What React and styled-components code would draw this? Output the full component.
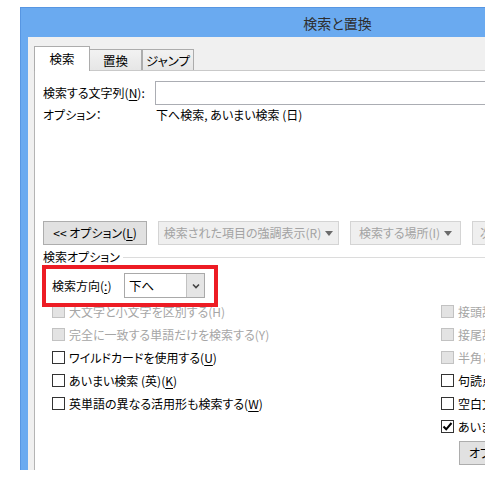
import React from "react";
import styled, { createGlobalStyle } from "styled-components";

const GlobalStyle = createGlobalStyle`
  html, body {
    margin: 0;
    padding: 0;
    background: #fff;
  }
  body {
    font-family: "Noto Sans CJK JP", "Noto Sans", sans-serif;
    font-size: 12px;
    font-feature-settings: "palt" 1;
    color: #000;
  }
`;

const Page = styled.div`
  width: 485px;
  height: 480px;
  overflow: hidden;
  box-sizing: border-box;
  padding: 7px 0 0 20px;
`;

const Window = styled.div`
  width: 634px;
  height: 463px;
  display: flex;
  flex-direction: column;
  background: #6aaaf0;
  border-top: 1px solid #5796e2;
  border-left: 1px solid #5796e2;
  box-sizing: border-box;
`;

const TitleBar = styled.div`
  height: 29px;
  display: flex;
  align-items: center;
  justify-content: center;
  font-size: 14px;
  color: #2e2e2e;
`;

const Client = styled.div`
  flex: 1;
  margin-left: 7px;
  background: #f0f0f0;
  padding: 9px 0 0 6px;
  display: flex;
  flex-direction: column;
  min-height: 0;
`;

const TabStrip = styled.div`
  height: 24px;
  display: flex;
  align-items: flex-end;
`;

const Tab = styled.div`
  position: relative;
  box-sizing: border-box;
  width: ${(p) => (p.$active ? 56 : 52)}px;
  height: ${(p) => (p.$active ? 25 : 21)}px;
  margin-bottom: ${(p) => (p.$active ? -1 : 0)}px;
  z-index: ${(p) => (p.$active ? 1 : 0)};
  border: 1px solid #acacac;
  border-bottom: none;
  border-left: ${(p) => (p.$joined ? "none" : "1px solid #acacac")};
  background: ${(p) => (p.$active ? "#fff" : "linear-gradient(#f2f2f2, #e6e6e6)")};
  display: flex;
  align-items: center;
  justify-content: center;
  font-size: 12.5px;
  line-height: 1;
  padding-top: ${(p) => (p.$active ? 1 : 2)}px;
`;

const Panel = styled.div`
  position: relative;
  flex: 1;
  background: #fff;
  border-left: 1px solid #b4b4b4;
  border-top: 1px solid #c9c9c9;
  padding-left: 8px;
  display: flex;
  flex-direction: column;
`;

const SearchRow = styled.div`
  margin-top: 10px;
  height: 24px;
  display: flex;
  align-items: center;
`;

const FieldLabel = styled.span`
  width: ${(p) => p.$w}px;
  flex: none;
  white-space: nowrap;
  line-height: 18px;
`;

const Key = styled.span`
  text-decoration: underline;
  text-underline-offset: 2px;
`;

const TextBox = styled.div`
  width: 440px;
  height: 24px;
  box-sizing: border-box;
  border: 1px solid #abadb3;
  background: #fff;
`;

const InfoRow = styled.div`
  margin-top: 1px;
  display: flex;
  line-height: 18px;
  white-space: nowrap;
`;

const ButtonRow = styled.div`
  margin-top: 97px;
  display: flex;
  gap: 11px;
`;

const Button = styled.div`
  flex: none;
  width: ${(p) => (p.$w ? `${p.$w}px` : "auto")};
  height: 24px;
  box-sizing: border-box;
  padding: 0 7px;
  border: 1px solid ${(p) => (p.$disabled ? "#d4d4d4" : "#adadad")};
  background: ${(p) => (p.$disabled ? "#efefef" : "#e1e1e1")};
  color: ${(p) => (p.$disabled ? "#a3a3a3" : "#000")};
  display: flex;
  align-items: center;
  justify-content: ${(p) => (p.$w ? "center" : "flex-start")};
  gap: 4px;
  white-space: nowrap;
  line-height: 1;
`;

const Caret = styled.svg`
  width: 8px;
  height: 5px;
  flex: none;
`;

const GroupHeader = styled.div`
  margin-top: 4px;
  height: 16px;
  display: flex;
  align-items: center;
  gap: 3px;
  white-space: nowrap;
  line-height: 16px;
`;

const GroupLine = styled.div`
  flex: 1;
  border-top: 1px solid #dcdcdc;
`;

const DirectionRow = styled.div`
  margin-top: 8px;
  padding-left: 9px;
  height: 25px;
  display: flex;
  align-items: center;
`;

const Select = styled.div`
  width: 81px;
  height: 25px;
  box-sizing: border-box;
  border: 1px solid #a9a9a9;
  background: #fff;
  display: flex;
  align-items: stretch;
`;

const SelectValue = styled.div`
  flex: 1;
  padding-left: 4px;
  display: flex;
  align-items: center;
  font-size: 12.5px;
`;

const SelectArrow = styled.div`
  width: 18px;
  box-sizing: border-box;
  border-left: 1px solid #c2c2c2;
  background: #e5e5e5;
  display: flex;
  align-items: center;
  justify-content: center;
`;

const OptionsGrid = styled.div`
  margin-top: 2px;
  display: grid;
  grid-template-columns: 398px 1fr;
`;

const Column = styled.div`
  display: flex;
  flex-direction: column;
  padding-left: ${(p) => p.$pad || 0}px;
`;

const CheckRow = styled.div`
  height: 23px;
  display: flex;
  align-items: center;
  gap: 4px;
  white-space: nowrap;
  color: ${(p) => (p.$disabled ? "#a6a6a6" : "#000")};
`;

const Box = styled.div`
  width: 13px;
  height: 13px;
  flex: none;
  box-sizing: border-box;
  border: 1px solid ${(p) => (p.$disabled ? "#c2c2c2" : "#333")};
  background: ${(p) => (p.$disabled ? "#e3e3e3" : "#fff")};
  display: flex;
  align-items: center;
  justify-content: center;
`;

const MoreButton = styled(Button)`
  margin-top: 3px;
  margin-left: 18px;
  align-self: flex-start;
  padding: 0 9px;
`;

const Highlight = styled.div`
  position: absolute;
  left: 7px;
  top: 194px;
  width: 176px;
  height: 42px;
  box-sizing: border-box;
  border: 4px solid #ed1c24;
  pointer-events: none;
`;

const DownCaret = () => (
  <Caret viewBox="0 0 8 5">
    <path d="M0 0h8L4 5z" fill="#6b6b6b" />
  </Caret>
);

const Check = ({ label, disabled, checked }) => (
  <CheckRow $disabled={disabled}>
    <Box $disabled={disabled}>
      {checked && (
        <svg width="11" height="11" viewBox="0 0 11 11">
          <path d="M1.5 5.5 L4.2 8.3 L9.5 2" fill="none" stroke="#000" strokeWidth="2" />
        </svg>
      )}
    </Box>
    <span>{label}</span>
  </CheckRow>
);

export default function App() {
  return (
    <>
      <GlobalStyle />
      <Page>
        <Window>
          <TitleBar>検索と置換</TitleBar>
          <Client>
            <TabStrip>
              <Tab $active>検索</Tab>
              <Tab $joined>置換</Tab>
              <Tab>ジャンプ</Tab>
            </TabStrip>
            <Panel>
              <SearchRow>
                <FieldLabel $w={112}>
                  検索する文字列(<Key>N</Key>):
                </FieldLabel>
                <TextBox />
              </SearchRow>
              <InfoRow>
                <FieldLabel $w={113}>オプション：</FieldLabel>
                <span>下へ検索, あいまい検索 (日)</span>
              </InfoRow>

              <ButtonRow>
                <Button $w={104}>
                  <span>
                    &lt;&lt; オプション(<Key>L</Key>)
                  </span>
                </Button>
                <Button $w={181} $disabled>
                  <span>検索された項目の強調表示(R)</span>
                  <DownCaret />
                </Button>
                <Button $w={111} $disabled>
                  <span>検索する場所(I)</span>
                  <DownCaret />
                </Button>
                <Button $disabled>
                  <span>次を検索(F)</span>
                </Button>
              </ButtonRow>

              <GroupHeader>
                <span>検索オプション</span>
                <GroupLine />
              </GroupHeader>

              <DirectionRow>
                <FieldLabel $w={72}>
                  検索方向(<Key>:</Key>)
                </FieldLabel>
                <Select>
                  <SelectValue>下へ</SelectValue>
                  <SelectArrow>
                    <svg width="8" height="6" viewBox="0 0 8 6">
                      <path d="M1 1.5 L4 4.5 L7 1.5" fill="none" stroke="#444" strokeWidth="1.6" />
                    </svg>
                  </SelectArrow>
                </Select>
              </DirectionRow>

              <OptionsGrid>
                <Column $pad={9}>
                  <Check disabled label="大文字と小文字を区別する(H)" />
                  <Check disabled label="完全に一致する単語だけを検索する(Y)" />
                  <Check label={<>ワイルドカードを使用する(<Key>U</Key>)</>} />
                  <Check label={<>あいまい検索 (英)(<Key>K</Key>)</>} />
                  <Check label={<>英単語の異なる活用形も検索する(<Key>W</Key>)</>} />
                </Column>
                <Column>
                  <Check disabled label="接頭辞に一致する(X)" />
                  <Check disabled label="接尾辞に一致する(T)" />
                  <Check disabled label="半角と全角を区別する(M)" />
                  <Check label={<>句読点を無視する(<Key>S</Key>)</>} />
                  <Check label={<>空白文字を無視する(<Key>W</Key>)</>} />
                  <Check checked label={<>あいまい検索 (日)(<Key>J</Key>)</>} />
                  <MoreButton>
                    <span>オプション(S)...</span>
                  </MoreButton>
                </Column>
              </OptionsGrid>

              <Highlight />
            </Panel>
          </Client>
        </Window>
      </Page>
    </>
  );
}
